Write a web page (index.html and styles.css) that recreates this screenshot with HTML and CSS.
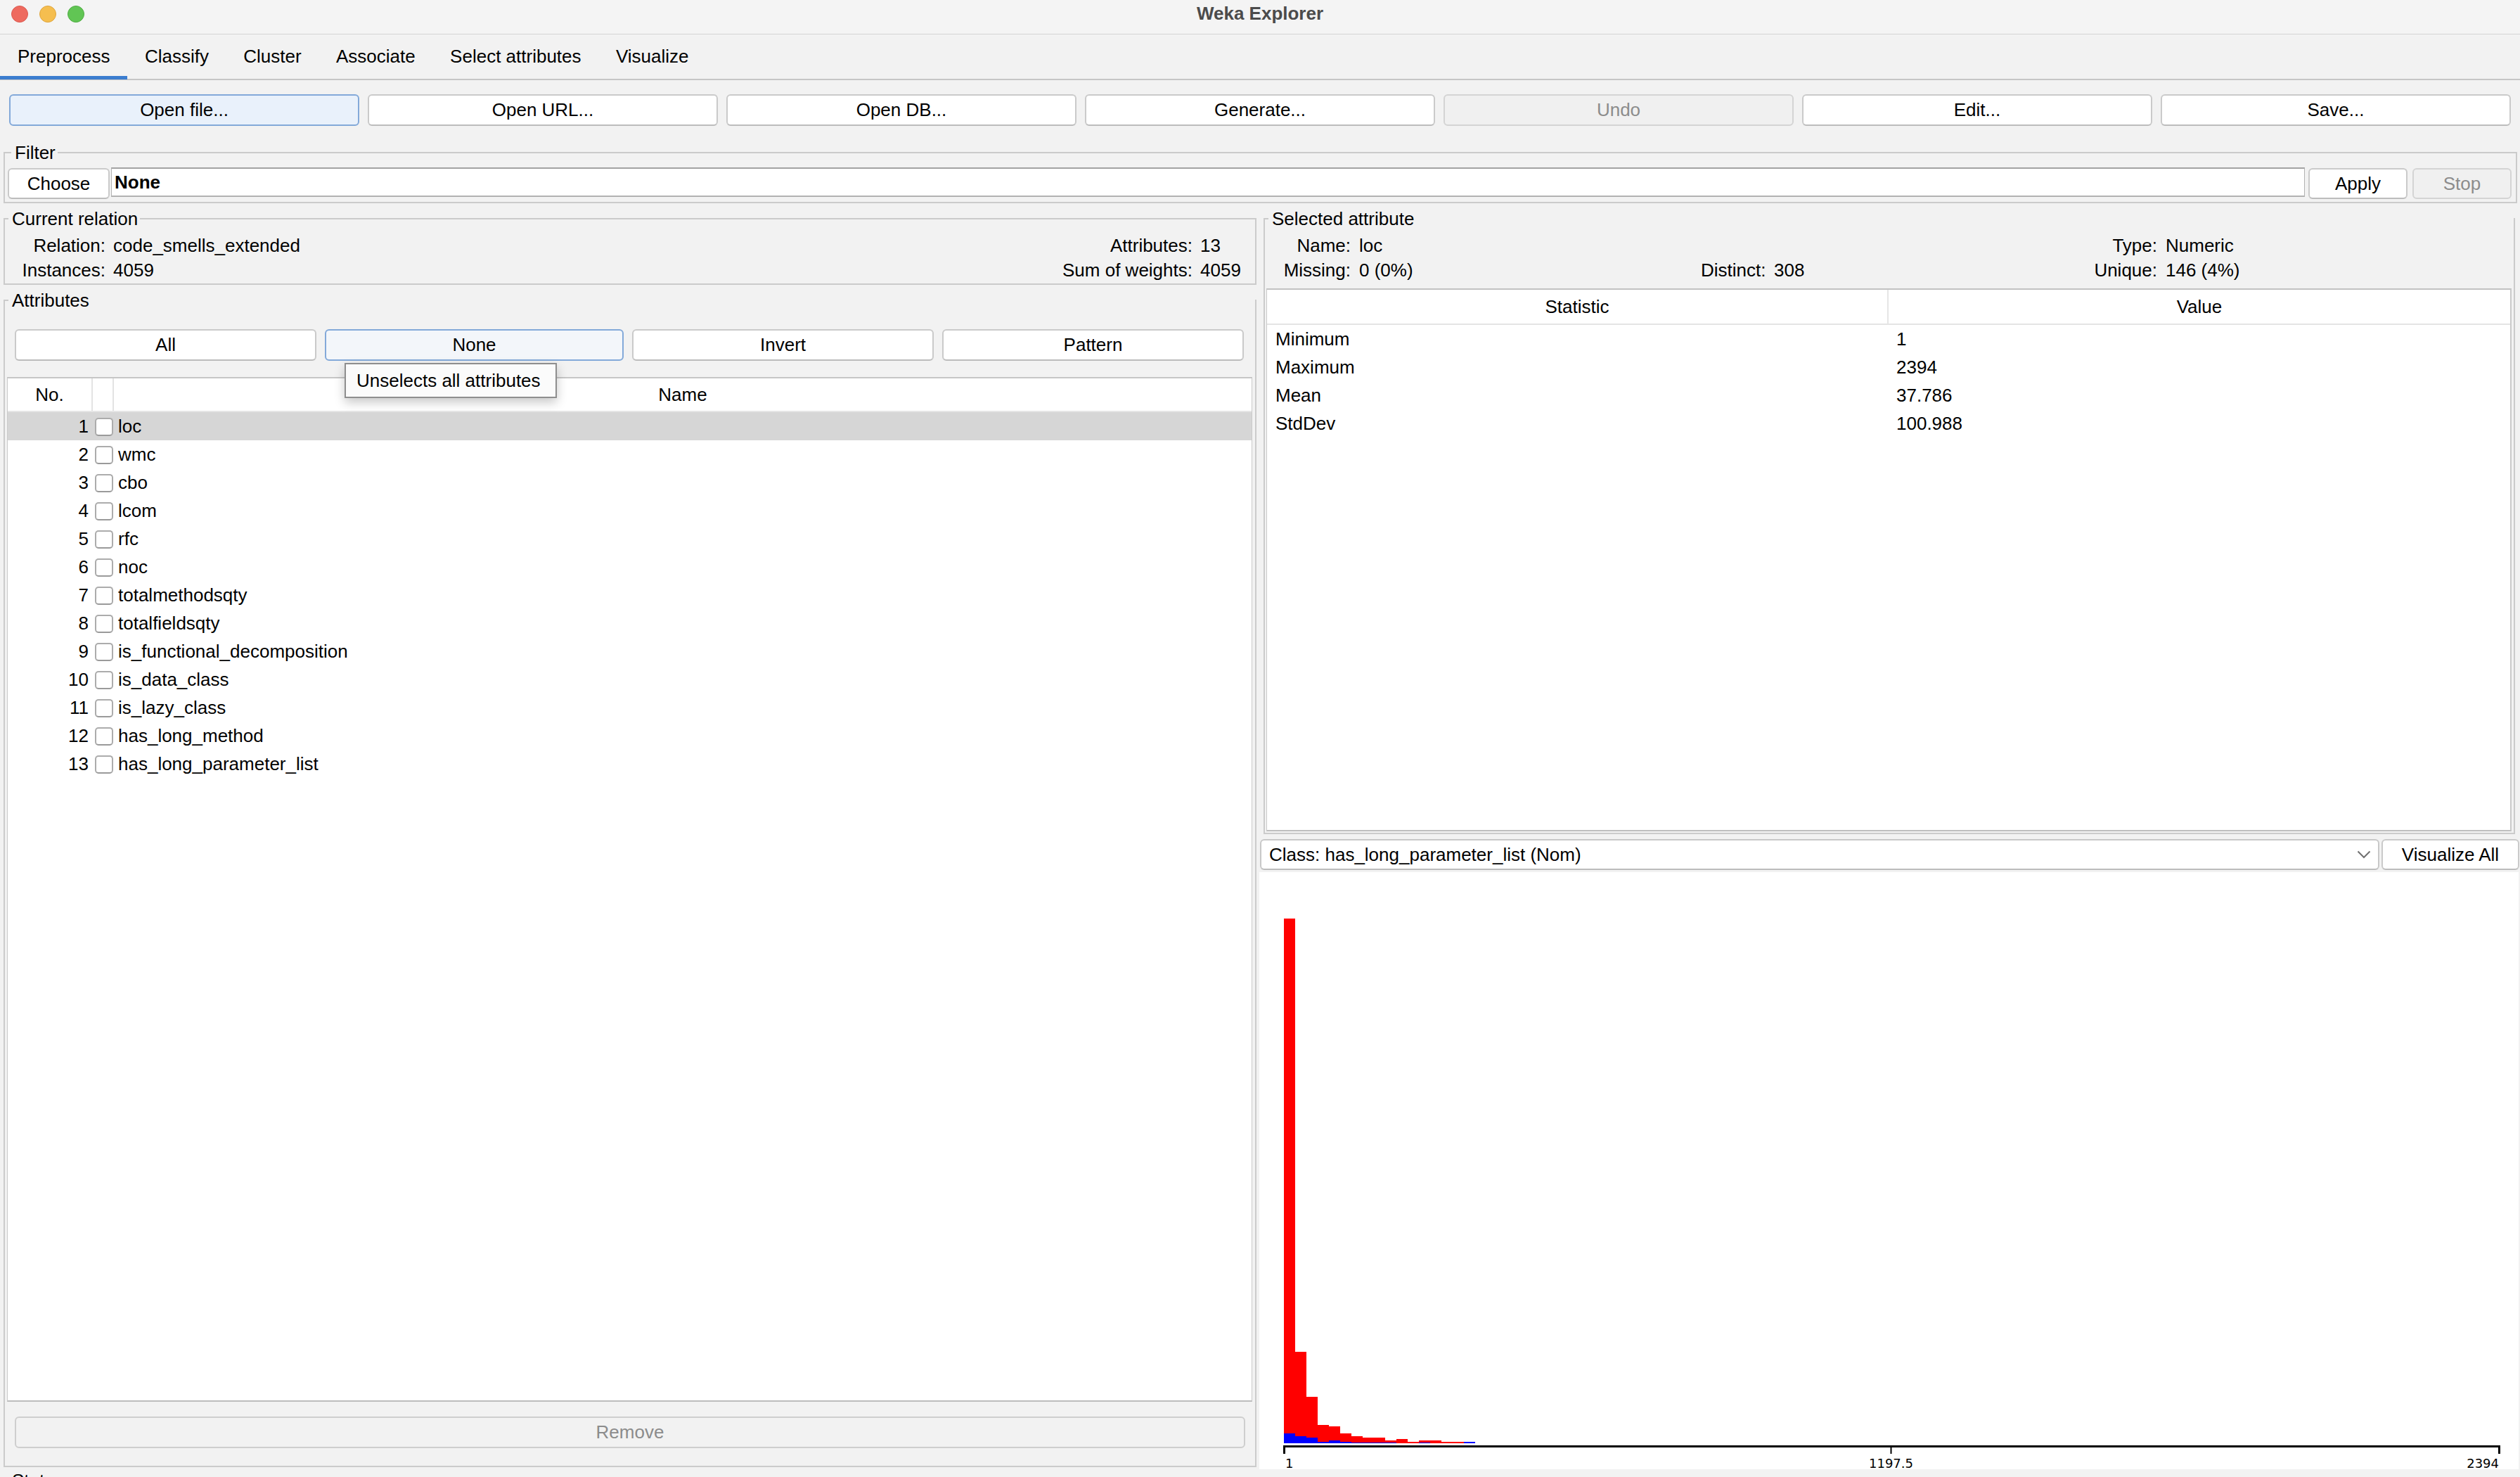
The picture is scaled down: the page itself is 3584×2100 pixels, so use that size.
FILE: index.html
```html
<!DOCTYPE html>
<html lang="en">
<head>
<meta charset="utf-8">
<title>Weka Explorer</title>
<link rel="stylesheet" href="styles.css">
</head>
<body>
<div class="window">
  <div class="titlebar">
    <div class="lights">
      <span class="light red"></span>
      <span class="light yellow"></span>
      <span class="light green"></span>
    </div>
    <div class="title">Weka Explorer</div>
    <div></div>
  </div>

  <div class="tabs">
    <div class="tab active">Preprocess</div>
    <div class="tab">Classify</div>
    <div class="tab">Cluster</div>
    <div class="tab">Associate</div>
    <div class="tab">Select attributes</div>
    <div class="tab">Visualize</div>
  </div>

  <div class="toolbar">
    <button class="btn focused">Open file...</button>
    <button class="btn">Open URL...</button>
    <button class="btn">Open DB...</button>
    <button class="btn">Generate...</button>
    <button class="btn disabled">Undo</button>
    <button class="btn">Edit...</button>
    <button class="btn">Save...</button>
  </div>

  <div class="panel filter">
    <div class="legend">Filter</div>
    <div class="filter-row">
      <button class="btn choose">Choose</button>
      <div class="field">None</div>
      <button class="btn apply">Apply</button>
      <button class="btn disabled stop">Stop</button>
    </div>
  </div>

  <div class="main">
    <div class="left">
      <div class="panel relation">
        <div class="legend">Current relation</div>
        <div class="rel-grid">
          <div class="lbl">Relation:</div><div>code_smells_extended</div>
          <div class="lbl">Attributes:</div><div>13</div>
          <div class="lbl">Instances:</div><div>4059</div>
          <div class="lbl">Sum of weights:</div><div>4059</div>
        </div>
      </div>

      <div class="panel attributes">
        <div class="legend">Attributes</div>
        <div class="sel-buttons">
          <button class="btn">All</button>
          <div class="tipwrap">
            <button class="btn hovered">None</button>
            <div class="tooltip">Unselects all attributes</div>
          </div>
          <button class="btn">Invert</button>
          <button class="btn">Pattern</button>
        </div>
        <div class="attr-table">
          <div class="thead">
            <div class="th c-no">No.</div>
            <div class="th c-chk"></div>
            <div class="th c-name">Name</div>
          </div>
          <div class="tbody">
            <div class="tr selected"><div class="num">1</div><div class="chkcell"><span class="chk"></span></div><div class="nm">loc</div></div>
            <div class="tr"><div class="num">2</div><div class="chkcell"><span class="chk"></span></div><div class="nm">wmc</div></div>
            <div class="tr"><div class="num">3</div><div class="chkcell"><span class="chk"></span></div><div class="nm">cbo</div></div>
            <div class="tr"><div class="num">4</div><div class="chkcell"><span class="chk"></span></div><div class="nm">lcom</div></div>
            <div class="tr"><div class="num">5</div><div class="chkcell"><span class="chk"></span></div><div class="nm">rfc</div></div>
            <div class="tr"><div class="num">6</div><div class="chkcell"><span class="chk"></span></div><div class="nm">noc</div></div>
            <div class="tr"><div class="num">7</div><div class="chkcell"><span class="chk"></span></div><div class="nm">totalmethodsqty</div></div>
            <div class="tr"><div class="num">8</div><div class="chkcell"><span class="chk"></span></div><div class="nm">totalfieldsqty</div></div>
            <div class="tr"><div class="num">9</div><div class="chkcell"><span class="chk"></span></div><div class="nm">is_functional_decomposition</div></div>
            <div class="tr"><div class="num">10</div><div class="chkcell"><span class="chk"></span></div><div class="nm">is_data_class</div></div>
            <div class="tr"><div class="num">11</div><div class="chkcell"><span class="chk"></span></div><div class="nm">is_lazy_class</div></div>
            <div class="tr"><div class="num">12</div><div class="chkcell"><span class="chk"></span></div><div class="nm">has_long_method</div></div>
            <div class="tr"><div class="num">13</div><div class="chkcell"><span class="chk"></span></div><div class="nm">has_long_parameter_list</div></div>
          </div>
        </div>
        <button class="btn disabled remove">Remove</button>
      </div>
    </div>

    <div class="right">
      <div class="panel selected-attr">
        <div class="legend">Selected attribute</div>
        <div class="info-grid">
          <div class="lbl">Name:</div><div>loc</div>
          <div></div><div></div>
          <div class="lbl">Type:</div><div>Numeric</div>
          <div class="lbl">Missing:</div><div>0 (0%)</div>
          <div class="lbl">Distinct:</div><div>308</div>
          <div class="lbl">Unique:</div><div>146 (4%)</div>
        </div>
        <div class="stats-table">
          <div class="s-head">
            <div class="sh first">Statistic</div>
            <div class="sh">Value</div>
          </div>
          <div class="s-row"><div class="sc first">Minimum</div><div class="sc">1</div></div>
          <div class="s-row"><div class="sc first">Maximum</div><div class="sc">2394</div></div>
          <div class="s-row"><div class="sc first">Mean</div><div class="sc">37.786</div></div>
          <div class="s-row"><div class="sc first">StdDev</div><div class="sc">100.988</div></div>
        </div>
      </div>

      <div class="class-row">
        <div class="combo">
          <span class="combo-text">Class: has_long_parameter_list (Nom)</span>
          <svg class="chevron" width="20" height="12" viewBox="0 0 20 12"><path d="M1.5 1.5 L10 10 L18.5 1.5" fill="none" stroke="#707070" stroke-width="2"/></svg>
        </div>
        <button class="btn visall">Visualize All</button>
      </div>

      <div class="histogram">
        <svg class="hist-svg" width="1791" height="849" viewBox="0 0 1791 849">
          <g fill="#ff0000">
            <rect x="35" y="66" width="16" height="746"/>
            <rect x="51" y="682" width="16" height="130"/>
            <rect x="67" y="746" width="16" height="66"/>
            <rect x="83" y="786" width="16" height="26"/>
            <rect x="99" y="788" width="16" height="24"/>
            <rect x="115" y="798" width="16" height="14"/>
            <rect x="131" y="802" width="16" height="10"/>
            <rect x="147" y="804" width="16" height="8"/>
            <rect x="163" y="804" width="16" height="8"/>
            <rect x="179" y="808" width="16" height="4"/>
            <rect x="195" y="806" width="16" height="6"/>
            <rect x="211" y="810" width="16" height="2"/>
            <rect x="227" y="808" width="16" height="4"/>
            <rect x="243" y="808" width="16" height="4"/>
            <rect x="259" y="810" width="16" height="2"/>
            <rect x="275" y="810" width="16" height="2"/>
          </g>
          <g fill="#0000ff">
            <rect x="35" y="798" width="16" height="14"/>
            <rect x="51" y="802" width="16" height="10"/>
            <rect x="67" y="804" width="16" height="8"/>
            <rect x="83" y="810" width="16" height="2"/>
            <rect x="99" y="808" width="16" height="4"/>
            <rect x="115" y="810" width="16" height="2"/>
            <rect x="131" y="811" width="16" height="1"/>
            <rect x="147" y="811" width="16" height="1"/>
            <rect x="163" y="811" width="16" height="1"/>
            <rect x="179" y="811" width="16" height="1"/>
            <rect x="227" y="811" width="16" height="1"/>
            <rect x="291" y="810" width="16" height="2"/>
          </g>
          <path d="M35.5 827 V816.5 H1763.5 V827" fill="none" stroke="#000" stroke-width="3"/>
          <path d="M898.5 816.5 V827" fill="none" stroke="#000" stroke-width="2"/>
          <g class="axis-label">
            <text x="37" y="847">1</text>
            <text x="898.5" y="847" text-anchor="middle">1197.5</text>
            <text x="1763" y="847" text-anchor="end">2394</text>
          </g>
        </svg>
      </div>
    </div>
  </div>

  <div class="panel status">
    <div class="legend">Status</div>
    <div class="status-text">OK</div>
  </div>
</div>
</body>
</html>
```

FILE: styles.css
```css
* {
  box-sizing: border-box;
}

html,
body {
  margin: 0;
  padding: 0;
}

body {
  width: 3584px;
  height: 2100px;
  overflow: hidden;
  background: #f2f2f2;
  font-family: "Liberation Sans", Arial, Helvetica, sans-serif;
  font-size: 26px;
  color: #000;
}

.window {
  width: 3584px;
  height: 2100px;
  overflow: hidden;
  display: flex;
  flex-direction: column;
  background: #f2f2f2;
}

/* ---------- title bar ---------- */
.titlebar {
  flex: none;
  height: 49px;
  display: grid;
  grid-template-columns: 1fr auto 1fr;
  background: #f4f4f4;
  border-bottom: 1px solid #d4d4d4;
}

.lights {
  display: flex;
  gap: 16px;
  padding: 8px 0 0 16px;
}

.light {
  width: 24px;
  height: 24px;
  border-radius: 50%;
}

.red {
  background: #ee6a5f;
  border: 1px solid #dc5a50;
}

.yellow {
  background: #f5be4f;
  border: 1px solid #dfa53c;
}

.green {
  background: #61c554;
  border: 1px solid #50ad44;
}

.title {
  font-weight: bold;
  color: #4b4b4b;
  line-height: 38px;
}

/* ---------- tabs ---------- */
.tabs {
  flex: none;
  height: 65px;
  display: flex;
  border-bottom: 2px solid #c6c6c6;
}

.tab {
  height: 63px;
  line-height: 63px;
  padding: 0 24.7px;
  white-space: nowrap;
}

.tab.active {
  height: 64px;
  padding-left: 25px;
  box-shadow: inset 0 -5px 0 #3c7dcf;
}

/* ---------- buttons ---------- */
.btn {
  display: block;
  appearance: none;
  font: inherit;
  color: #000;
  background: #fff;
  border: 2px solid #cacaca;
  border-bottom-color: #bcbcbc;
  border-radius: 6px;
  padding: 0;
  margin: 0;
  height: 45px;
  line-height: 41px;
  text-align: center;
  white-space: nowrap;
}

.btn.focused {
  background: #e9f1fb;
  border-color: #83a9d9;
}

.btn.hovered {
  background: #f3f6fa;
  border-color: #83a9d9;
}

.btn.disabled {
  background: #f0f0f0;
  color: #8c8c8c;
  border-color: #d4d4d4;
}

.toolbar {
  flex: none;
  display: flex;
  gap: 12px;
  padding: 0 13px;
  margin-top: 20px;
}

.toolbar .btn {
  flex: 1 1 0;
}

/* ---------- titled panels ---------- */
.panel {
  border: 2px solid #cbcbcb;
  background: #f2f2f2;
}

.legend {
  display: table;
  margin: -16px 0 0 5px;
  padding: 0 3px 0 5px;
  line-height: 30px;
  background: #f2f2f2;
  white-space: nowrap;
}

/* ---------- filter ---------- */
.filter {
  flex: none;
  margin: 37px 4px 0 5px;
  padding: 0 6px 4px 4px;
}

.filter-row {
  display: flex;
  align-items: flex-start;
  margin-top: 7px;
}

.btn.choose {
  width: 145px;
  height: 44px;
  line-height: 40px;
}

.field {
  flex: 1;
  margin: -1px 0 0 2px;
  height: 42px;
  line-height: 38px;
  background: #fff;
  border: 2px solid #b2b2b2;
  border-top-color: #a3a3a3;
  border-left-width: 1px;
  border-right-width: 1px;
  padding-left: 4px;
  font-weight: bold;
}

.btn.apply {
  width: 141px;
  height: 44px;
  line-height: 40px;
  margin-left: 5px;
}

.btn.stop {
  width: 141px;
  height: 44px;
  line-height: 40px;
  margin-left: 7px;
}

/* ---------- main area ---------- */
.main {
  flex: none;
  display: flex;
  height: 1779px;
  margin-top: 21px;
  padding-left: 5px;
}

.left {
  width: 1782px;
  flex: none;
  display: flex;
  flex-direction: column;
  padding-bottom: 3px;
}

.right {
  flex: 1;
  margin-left: 4px;
  display: flex;
  flex-direction: column;
  min-width: 0;
}

/* current relation */
.relation {
  flex: none;
  padding: 0 0 1px 0;
}

.rel-grid {
  display: grid;
  grid-template-columns: 143px 1fr auto 78px;
  column-gap: 11px;
  grid-auto-rows: 35px;
  line-height: 35px;
  padding-top: 6px;
  white-space: nowrap;
}

.lbl {
  text-align: right;
}

/* attributes */
.attributes {
  flex: 1;
  margin-top: 21px;
  display: flex;
  flex-direction: column;
  padding-bottom: 25px;
  min-height: 0;
}

.sel-buttons {
  display: flex;
  gap: 12px;
  margin-top: 26px;
  padding: 0 16px 0 14px;
}

.sel-buttons > .btn,
.tipwrap {
  flex: 1 1 0;
}

.tipwrap {
  position: relative;
}

.tipwrap .btn {
  width: 100%;
}

.tooltip {
  position: absolute;
  z-index: 5;
  top: 48px;
  left: 28px;
  width: 302px;
  height: 50px;
  line-height: 46px;
  padding-left: 15px;
  background: #fbfbfb;
  border: 2px solid #8e8e8e;
  box-shadow: 0 6px 14px rgba(0, 0, 0, 0.22);
  white-space: nowrap;
}

.attr-table {
  flex: 1;
  margin: 23px 4px 0 3px;
  background: #fff;
  border-top: 2px solid #c6c6c6;
  border-left: 1px solid #cacaca;
  border-right: 1px solid #cacaca;
  border-bottom: 2px solid #bdbdbd;
  min-height: 0;
  overflow: hidden;
}

.thead {
  display: grid;
  grid-template-columns: 121px 30px 1fr;
  height: 48px;
  border-bottom: 2px solid #e6e6e6;
}

.th {
  text-align: center;
  line-height: 46px;
}

.th.c-no,
.th.c-chk {
  border-right: 2px solid #e3e3e3;
}

.tr {
  display: grid;
  grid-template-columns: 121px 30px 1fr;
  height: 40px;
  line-height: 40px;
}

.tr.selected {
  background: #d6d6d6;
}

.num {
  text-align: right;
  padding-right: 6px;
}

.chkcell {
  padding: 8px 0 0 3px;
}

.chk {
  display: block;
  width: 26px;
  height: 26px;
  background: #fff;
  border: 2px solid #acacac;
  border-bottom-color: #9a9a9a;
  border-radius: 5px;
}

.nm {
  padding-left: 6px;
  white-space: nowrap;
}

.btn.remove {
  flex: none;
  margin: 21px 14px 0 14px;
  background: #f2f2f2;
  border-color: #cecece;
}

/* selected attribute */
.selected-attr {
  flex: none;
  height: 876px;
  margin: 0 7px 0 6px;
  display: flex;
  flex-direction: column;
  padding-bottom: 2px;
}

.info-grid {
  display: grid;
  grid-template-columns: 122px 474px 92px 443px 90px 1fr;
  column-gap: 12px;
  grid-auto-rows: 35px;
  line-height: 35px;
  padding-top: 6px;
  white-space: nowrap;
}

.stats-table {
  flex: 1;
  margin: 8px 3px 0 2px;
  background: #fff;
  border-top: 2px solid #c2c2c2;
  border-left: 1px solid #cacaca;
  border-right: 2px solid #cacaca;
  border-bottom: 2px solid #bfbfbf;
}

.s-head {
  display: grid;
  grid-template-columns: 1fr 1fr;
  height: 50px;
  border-bottom: 2px solid #e4e4e4;
}

.sh {
  text-align: center;
  line-height: 48px;
}

.sh.first {
  border-right: 2px solid #e6e6e6;
}

.s-row {
  display: grid;
  grid-template-columns: 1fr 1fr;
  height: 40px;
  line-height: 40px;
}

.sc {
  padding-left: 11px;
}

.sc.first {
  padding-left: 12px;
}

/* class combo row */
.class-row {
  flex: none;
  display: flex;
  gap: 3px;
  margin-top: 7px;
  padding: 0 1px;
  height: 44px;
}

.combo {
  flex: 1;
  display: flex;
  align-items: center;
  background: #fff;
  border: 2px solid #c8c8c8;
  border-bottom-color: #bcbcbc;
  border-radius: 6px;
  padding: 0 10px 0 11px;
}

.combo-text {
  flex: 1;
  white-space: nowrap;
}

.chevron {
  display: block;
  flex: none;
}

.btn.visall {
  width: 196px;
  height: 44px;
  line-height: 40px;
}

/* histogram */
.histogram {
  flex: 1;
  margin: 3px 2px 0 0;
  background: #fff;
  overflow: visible;
}

.hist-svg {
  display: block;
  overflow: visible;
}

.axis-label {
  font-family: "DejaVu Sans", Verdana, sans-serif;
  font-size: 18px;
  fill: #000;
}

/* status */
.status {
  flex: none;
  margin: 15px 4px 0 5px;
  height: 80px;
}

.status-text {
  padding: 6px 8px;
}
```
